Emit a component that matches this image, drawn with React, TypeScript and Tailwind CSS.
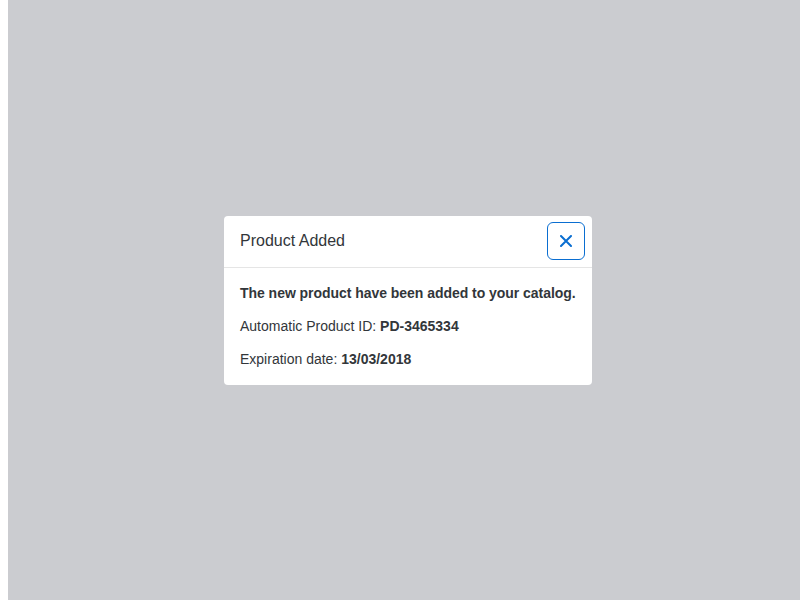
import React from 'react';

const CloseIcon = () => (
  <svg width="12" height="12" viewBox="0 0 12 12" fill="none">
    <path d="M1 1L11 11M11 1L1 11" stroke="#0a6ed1" strokeWidth="2" strokeLinecap="round" />
  </svg>
);

const App = () => {
  return (
    <div className="flex h-screen w-full bg-white" style={{ fontFamily: '"Liberation Sans", Arial, sans-serif' }}>
      <div className="w-2 shrink-0 bg-white" />
      <div className="flex flex-1 items-center justify-center bg-[#cbccd0] pl-2">
        <div className="w-[368px] rounded bg-white text-[#32363a]">
          <header className="flex h-[52px] items-center justify-between border-b border-[#e5e5e5] pl-4 pr-[7px]">
            <h1 className="text-base">Product Added</h1>
            <button className="flex h-[38px] w-[38px] items-center justify-center rounded-md border border-[#0a6ed1] bg-white">
              <CloseIcon />
            </button>
          </header>
          <div className="flex flex-col gap-[15px] px-4 pt-4 pb-[17px] text-sm leading-[18px]">
            <p className="whitespace-nowrap font-bold tracking-[-0.04px]">The new product have been added to your catalog.</p>
            <p>
              Automatic Product ID: <span className="font-bold">PD-3465334</span>
            </p>
            <p>
              Expiration date: <span className="font-bold">13/03/2018</span>
            </p>
          </div>
        </div>
      </div>
    </div>
  );
};

export default App;
